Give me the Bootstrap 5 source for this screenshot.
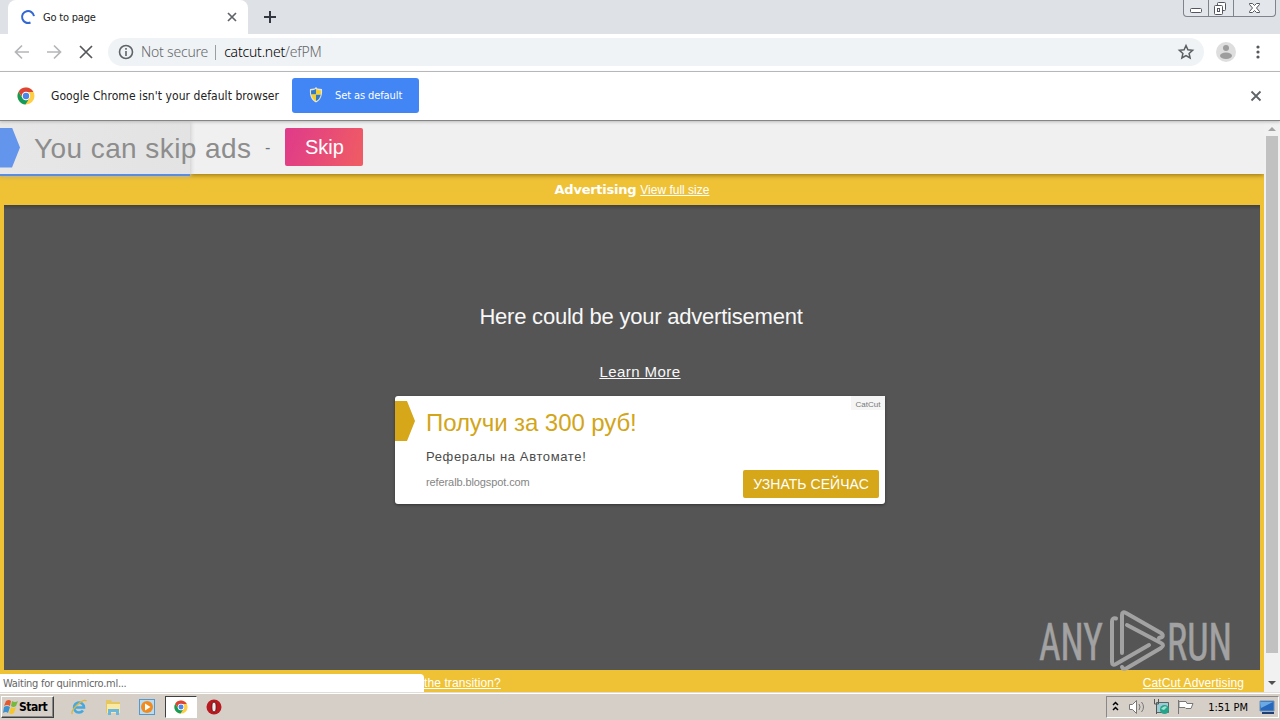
<!DOCTYPE html>
<html lang="en">

<head>
  <meta charset="UTF-8" />
  <meta name="viewport" content="width=device-width, initial-scale=1" />
  <title>Go to page</title>
  <link href="https://cdn.jsdelivr.net/npm/bootstrap@5.3.2/dist/css/bootstrap.min.css" rel="stylesheet" />
  <style>
    body {
      width: 1280px;
      height: 720px;
      overflow: hidden;
      font-family: "DejaVu Sans Condensed", "DejaVu Sans", sans-serif;
      font-stretch: condensed;
      font-size: 11px;
      line-height: 1;
      color: #222;
    }

    svg {
      display: block;
      flex-shrink: 0;
    }

    a,
    a:hover {
      color: inherit;
    }

    .arial {
      font-family: "Liberation Sans", Arial, sans-serif;
      font-stretch: normal;
    }

    /* Tab strip */
    .tab-strip {
      height: 34px;
      background: #dee1e6;
      padding-left: 8px;
    }

    .browser-tab {
      width: 240px;
      height: 34px;
      padding: 0 10px 0 12px;
      background: #fff;
      border-radius: 8px 8px 0 0;
      letter-spacing: -0.2px;
    }

    .browser-tab span {
      margin-left: 7px;
    }

    .window-buttons {
      height: 17px;
      margin-right: 4px;
      border: 1px solid #7e838c;
      border-top: 0;
      border-radius: 0 0 4px 4px;
      background: #e3e6ea;
    }

    .window-buttons div {
      height: 16px;
      width: 24px;
    }

    .window-buttons div+div {
      width: 25px;
      border-left: 1px solid #7e838c;
    }

    .window-buttons div:last-child {
      width: 42px;
    }

    /* Address bar */
    .toolbar {
      height: 38px;
      border-bottom: 1px solid #b4b6b8;
      padding: 4px 12px 5px 14px;
    }

    .address {
      width: 1096px;
      height: 28px;
      margin-left: 14px;
      border-radius: 14px;
      background: #f0f3f5;
      padding: 0 9px 0 10px;
      font-size: 14px;
      font-family: "Noto Sans", sans-serif;
      font-weight: 300;
      letter-spacing: -.2px;
      color: #63676b;
    }

    .address .not-secure {
      margin-left: 7px;
    }

    .address .divider {
      width: 1px;
      height: 15px;
      background: #9a9da1;
      margin: 0 8px 0 7px;
    }

    .profile-icon {
      margin-left: 12px;
    }

    /* Default browser bar */
    .infobar {
      height: 49px;
      padding: 0 18px 0 17px;
      border-bottom: 1px solid #858585;
      z-index: 2;
      background: #fff;
      box-shadow: 0 1px 3px #bbb;
    }

    .infobar .message {
      width: 241px;
      margin-left: 16px;
      font-size: 12px;
      letter-spacing: .06px;
    }

    .default-btn {
      width: 127px;
      height: 35px;
      margin-bottom: 2px;
      border-radius: 3px;
      background: #4285f4;
      color: #fff;
      padding-left: 17px;
      letter-spacing: -0.1px;
    }

    /* Page */
    .page-row {
      height: 571px;
    }

    .page-body {
      width: 1264px;
      background: #efc236;
      overflow: hidden;
    }

    .skip-bar {
      height: 53px;
      background: #f0f0f0;
      box-shadow: 0 1px 5px #8d6e11;
      z-index: 1;
    }

    .skip-progress {
      left: 0;
      top: 0;
      width: 190px;
      height: 55px;
      background: linear-gradient(90deg, #e7e7e7, #e3e3e3);
      border-bottom: 2px solid #5a8de0;
      box-shadow: 1px 0 4px #ccc;
    }

    .pointer-tag {
      width: 20px;
      height: 40px;
      clip-path: polygon(0 0, 60% 0, 100% 50%, 60% 100%, 0 100%);
      background: #6495ed;
    }

    .skip-title {
      width: 231px;
      margin-left: 14px;
      font-size: 28px;
      letter-spacing: .42px;
      color: #8d8d8d;
      padding-top: 2px;
    }

    .skip-btn {
      width: 78px;
      height: 38px;
      margin: 0 0 1px 15px;
      border-radius: 2px;
      background: linear-gradient(110deg, #df3a8b, #f05d62);
      color: #fff;
      font-size: 20px;
    }

    .ad-heading {
      height: 31px;
      color: #fff;
      font-size: 12px;
    }

    .ad-heading strong {
      font-family: "DejaVu Sans", sans-serif;
      font-stretch: normal;
      font-size: 13px;
      letter-spacing: -.25px;
    }

    .ad-area {
      height: 465px;
      margin: 0 4px;
      padding-top: 101px;
      padding-left: 16px;
      background: linear-gradient(#414141, #555 5px);
      color: #f8f8f8;
    }

    .ad-title {
      font-size: 22px;
      line-height: 22px;
      margin-left: 2px;
      letter-spacing: -.22px;
    }

    .learn-more {
      font-size: 15px;
      line-height: 17px;
      margin-top: 35px;
      letter-spacing: .45px;
    }

    .ad-card {
      width: 490px;
      height: 108px;
      margin-top: 16px;
      background: #fff;
      border-radius: 3px;
      box-shadow: 0 1px 3px #333;
    }

    .ad-card .pointer-tag {
      margin-top: 5px;
      background: #d6a719;
    }

    .ad-copy {
      margin-left: 11px;
      width: 317px;
    }

    .ad-copy h2 {
      margin: 15px 0 0;
      font-size: 24px;
      font-weight: 400;
      line-height: 24px;
      color: #d3a519;
      letter-spacing: -.08px;
    }

    .ad-copy p {
      margin: 15px 0 0;
      font-size: 13px;
      color: #4b4b4b;
      letter-spacing: .63px;
    }

    .ad-copy .site {
      margin-top: 14px;
      font-size: 11px;
      color: #858585;
      letter-spacing: -.1px;
    }

    .brand-label {
      width: 34px;
      height: 14px;
      padding-top: 3px;
      background: #f5f5f5;
      font-size: 8px;
      color: #777;
    }

    .learn-btn {
      width: 136px;
      height: 28px;
      margin: 0 6px 6px 0;
      border-radius: 2px;
      background: #d6a719;
      color: #fff;
      font-size: 14px;
      letter-spacing: .05px;
    }

    .page-footer {
      height: 22px;
      padding-top: 4px;
      color: #fff;
      font-size: 12px;
      letter-spacing: .1px;
    }

    .status-text {
      width: 424px;
      height: 18px;
      padding-left: 3px;
      background: #fff;
      border-radius: 0 4px 0 0;
      color: #666;
      font-family: "DejaVu Sans Condensed", sans-serif;
      font-size: 11px;
      letter-spacing: -.28px;
    }

    .scroll-track {
      width: 16px;
      background: #f1f1f1;
    }

    .scroll-track .thumb {
      width: 12px;
      height: 517px;
      background: #c1c1c1;
    }

    .watermark {
      left: 1036px;
      top: 607px;
      z-index: 2;
    }

    /* Taskbar */
    .taskbar {
      height: 28px;
      background: #d6cfc8;
      border-top: 1px solid #e2ddd6;
      box-shadow: inset 0 1px #fff;
      padding: 3px 1px 2px;
    }

    .start-btn {
      width: 53px;
      height: 22px;
      padding-left: 1px;
      border: 1px solid;
      border-color: #fff #404040 #404040 #fff;
      box-shadow: inset -1px -1px #888;
      color: #000;
      font-size: 12px;
      font-weight: 700;
      letter-spacing: -.5px;
    }

    .quick-launch {
      margin-left: 16px;
      gap: 16px;
    }

    .task-active {
      width: 32px;
      height: 22px;
      margin: 0 9px;
      background: #fff;
      border: 1px solid;
      border-color: #404040 #fff #fff #404040;
    }

    .tray {
      width: 173px;
      height: 22px;
      border: 1px solid;
      border-color: #888 #fff #fff #888;
      color: #000;
    }

    .tray svg:last-child {
      margin: 0 2px 0 9px;
    }
  </style>
</head>

<body class="d-flex flex-column position-relative">
  <svg width="0" height="0" class="position-absolute">
    <symbol id="chrome" viewBox="0 0 18 18">
      <circle cx="9" cy="9" r="8.5" fill="#ffce45" />
      <path d="M1.6 4.8A8.5 8.5 0 0 1 16.4 5H9a4 4 0 0 0-3.8 5z" fill="#dd4437" />
      <path d="M1.6 4.8A8.5 8.5 0 0 0 8.5 17.5L12.4 11.2A4 4 0 0 1 5.4 11z" fill="#149b5a" />
      <circle cx="9" cy="9" r="4.2" fill="#fff" />
      <circle cx="9" cy="9" r="3.2" fill="#4a86ec" />
    </symbol>
  </svg>

  <div class="tab-strip d-flex justify-content-between">
    <div class="d-flex align-items-center">
      <div class="browser-tab d-flex align-items-center">
        <svg width="16" height="16" fill="none" stroke="#3367d6" stroke-width="2">
          <path d="M10.5 13.5A6 6 0 1 1 14 7.2" />
        </svg>
        <span class="flex-grow-1">Go to page</span>
        <svg width="12" height="12" stroke="#5f6368" stroke-width="1.7">
          <path d="M2 2l8 8M10 2l-8 8" />
        </svg>
      </div>
      <svg class="ms-3" width="14" height="14" stroke="#333740" stroke-width="2">
        <path d="M6 1v12M0 7h12" />
      </svg>
    </div>
    <div class="window-buttons d-flex">
      <div><svg width="24" height="16" fill="#fff" stroke="#535660">
          <rect x="6.5" y="8.5" width="11" height="4" rx="1" />
        </svg></div>
      <div><svg width="24" height="16" fill="#fff" stroke="#535660">
          <rect x="8.5" y="2.5" width="8" height="8" rx="1" />
          <rect x="5.5" y="5.5" width="8" height="9" rx="1" />
          <rect x="8.5" y="8.5" width="2" height="3" />
        </svg></div>
      <div><svg width="41" height="16" fill="#fff" stroke="#535660">
          <path d="M15.5 3.5h3l2 2 2-2h3v1l-3 3.5 3 3.5v1h-3l-2-2-2 2h-3v-1l3-3.5-3-3.5z" />
        </svg></div>
    </div>
  </div>

  <div class="toolbar d-flex align-items-center">
    <svg width="80" height="16" fill="none" stroke="#b4b6b9" stroke-width="1.7">
      <path d="M15 8H2M8 1.5L1.5 8 8 14.5M33 8h13M40 1.5L46.5 8 40 14.5" />
      <path stroke="#54575b" d="M66 2l12 12M78 2L66 14" />
    </svg>
    <div class="address d-flex align-items-center">
      <svg width="16" height="16" fill="none" stroke="#5f6368" stroke-width="1.6">
        <circle cx="8" cy="8" r="6.5" />
        <path d="M8 7v5M8 4v1.7" />
      </svg>
      <span class="not-secure">Not secure</span>
      <span class="divider"></span>
      <span class="flex-grow-1"><span class="text-black">catcut.net</span>/efPM</span>
      <svg width="18" height="18" fill="none" stroke="#5b5e62" stroke-width="1.5">
        <path d="M9 2.5l1.9 4.3 4.7.5-3.5 3.1 1 4.6L9 12.6 4.9 15l1-4.6-3.5-3.1 4.7-.5z" />
      </svg>
    </div>
    <svg class="profile-icon" width="20" height="20">
      <circle cx="10" cy="10" r="10" fill="#dedede" />
      <circle cx="10" cy="6" r="3" fill="#9d9d9d" />
      <ellipse cx="10" cy="13.7" rx="6" ry="3.2" fill="#9d9d9d" />
    </svg>
    <svg class="ms-auto" width="20" height="16" fill="#55585c">
      <circle cx="10" cy="3" r="1.6" />
      <circle cx="10" cy="8" r="1.6" />
      <circle cx="10" cy="13" r="1.6" />
    </svg>
  </div>

  <div class="infobar position-relative d-flex align-items-center">
    <svg width="18" height="18">
      <use href="#chrome" />
    </svg>
    <span class="message text-nowrap">Google Chrome isn't your default browser</span>
    <div class="default-btn d-flex align-items-center">
      <svg width="14" height="16">
        <path d="M7 0l1.5 1.5L13 2c.6 6-1 11-6 13.5C2 13 .4 8 1 2l4.5-.5z" fill="#e4e5d8" />
        <path d="M7 2v5.5H2.2C2 6 2 5 2.1 3.2c2 0 3.5-.2 4.9-1.2" fill="#3379c4" />
        <path d="M7 7.5h4.8c-.6 3-2.1 5.2-4.8 6.6z" fill="#3379c4" />
        <path d="M7 2c1.4 1 3 1.2 4.9 1.2.1 1.8.1 2.8-.1 4.300H7zM7 7.5v6.6c-2.7-1.4-4.2-3.6-4.8-6.6z" fill="#f4cf2c" />
      </svg>
      <span class="ms-2 ps-1">Set as default</span>
    </div>
    <svg class="ms-auto" width="12" height="12" stroke="#5f6368" stroke-width="1.8">
      <path d="M1.5 1.5l9 9M10.5 1.5l-9 9" />
    </svg>
  </div>

  <div class="page-row d-flex">
    <div class="page-body arial d-flex flex-column">
      <div class="skip-bar position-relative d-flex align-items-center">
        <div class="skip-progress position-absolute"></div>
        <div class="pointer-tag position-relative"></div>
        <span class="skip-title position-relative text-nowrap">You can skip ads</span>
        <span class="position-relative fs-6 text-secondary">-</span>
        <div class="skip-btn d-flex align-items-center justify-content-center">Skip</div>
      </div>
      <div class="ad-heading d-flex align-items-center justify-content-center">
        <strong>Advertising</strong><a href="#" class="ms-1">View full size</a>
      </div>
      <div class="ad-area d-flex flex-column align-items-center">
        <div class="ad-title">Here could be your advertisement</div>
        <a href="#" class="learn-more">Learn More</a>
        <div class="ad-card d-flex">
          <div class="pointer-tag"></div>
          <div class="ad-copy text-nowrap">
            <h2>Получи за 300 руб!</h2>
            <p>Рефералы на Автомате!</p>
            <div class="site">referalb.blogspot.com</div>
          </div>
          <div class="d-flex flex-column align-items-end justify-content-between">
            <div class="brand-label d-flex align-items-center justify-content-center">CatCut</div>
            <div class="learn-btn d-flex align-items-center justify-content-center">УЗНАТЬ СЕЙЧАС</div>
          </div>
        </div>
      </div>
      <div class="page-footer d-flex align-items-center">
        <div class="status-text d-flex align-items-center">Waiting for quinmicro.ml...</div>
        <a href="#">the transition?</a>
        <a href="#" class="ms-auto me-3 pe-1">CatCut Advertising</a>
      </div>
    </div>
    <div class="scroll-track d-flex flex-column align-items-center">
      <svg width="16" height="15" fill="#a3a3a3">
        <path d="M4 10h8L8 6z" />
      </svg>
      <div class="thumb"></div>
      <svg class="mt-auto" width="16" height="17" fill="#505050">
        <path d="M4 6h8l-4 4z" />
      </svg>
    </div>
  </div>

  <svg class="watermark position-absolute" width="204" height="68" fill="#a2a2a2" font-family="Roboto, sans-serif" font-size="52">
    <g stroke="#a2a2a2" stroke-width=".6">
      <text transform="translate(3 53) scale(.72 1)">ANY</text>
      <text transform="translate(131 53) scale(.73 1)">RUN</text>
    </g>
    <g fill="none" stroke="#a2a2a2" stroke-width="4" stroke-linecap="round" stroke-linejoin="round">
      <path d="M80 11.5q-4-1-4 3V55q0 4 4 2l33-19" />
      <path d="M86 46V8q0-4 4-2l35 20q3 2 1 4l-3 1M91 18l34 18q4 2 0 5L91 61q-4 2-5-1" />
    </g>
  </svg>

  <div class="taskbar d-flex align-items-center">
    <div class="start-btn d-flex align-items-center">
      <svg width="16" height="16">
        <path d="M3 2q3-2 5 0L7 7Q4 5 1 7z" fill="#e4582f" />
        <path d="M9 2q3 2 6 0l-2 5q-3 2-5 0z" fill="#77b83f" />
        <path d="M1 8q3-2 6 0l-2 6q-2-2-5 0z" fill="#3c91d0" />
        <path d="M8 8q3 2 5 0l-2 6q-3 2-5 0z" fill="#f5c62e" />
      </svg>
      <span>Start</span>
    </div>
    <div class="quick-launch d-flex">
      <svg width="18" height="18" fill="none">
        <path d="M4.5 9.5h9.5A5 5 0 1 0 13 12.5" stroke="#45a9e0" stroke-width="2.6" />
        <path d="M2.5 16C-1 13 13 0 16.5 3" stroke="#dcb83f" stroke-width="1.3" />
      </svg>
      <svg width="18" height="18">
        <path d="M2 2h5l1 2h8v11H2z" fill="#e5c761" />
        <path d="M3 6h13v9H3z" fill="#fae9a2" />
        <path d="M4 17v-6h11v6h-3v-3H7v3z" fill="#6bb7dd" />
      </svg>
      <svg width="18" height="18">
        <rect x="1.5" y="1.5" width="15" height="15" fill="#b8dcf3" stroke="#5599cc" />
        <circle cx="9" cy="9" r="6" fill="#f18b20" />
        <path d="M7 5.5v7L12.5 9z" fill="#fff" />
      </svg>
    </div>
    <div class="task-active d-flex align-items-center justify-content-center">
      <svg width="14" height="14">
        <use href="#chrome" />
      </svg>
    </div>
    <svg width="16" height="16">
      <circle cx="8" cy="8" r="7.5" fill="#b91a20" />
      <ellipse cx="8" cy="8" rx="2.2" ry="5" fill="#eee" stroke="#651014" />
    </svg>
    <div class="tray d-flex align-items-center ms-auto">
      <svg width="92" height="20" fill="none">
        <path d="M6 8l2.5-2.5L11 8M6 13l2.5-2.5L11 13" stroke="#000" stroke-width="1.5" />
        <path d="M22.5 7.5h3l4-4v13l-4-4h-3z" fill="#fff" stroke="#777" />
        <path d="M32 7q2 3 0 6M34.5 5q4 5 0 10" stroke="#777" />
        <path d="M49.5 5.5h12v10h-12z" fill="#9bcbd4" stroke="#566" />
        <path d="M47.5 2v5h4V2M49.5 7v10" stroke="#555" />
        <circle cx="57.5" cy="12.5" r="4.5" fill="#25a48b" />
        <path d="M54 12q3-4 6-2l-3 3z" fill="#a2e1d1" />
        <path d="M71.5 3v14M72 4.5h7l1 2h6l-2 5h-5l-1-1h-6z" fill="#fff" stroke="#777" />
      </svg>
      <span class="ms-auto">1:51 PM</span>
      <svg width="19" height="20">
        <path d="M3 4h14v10H3z" fill="#2768bd" stroke="#6d91b8" />
        <path d="M3 5h13L4 11z" fill="#6ba9e5" />
        <path d="M5 15h12v2H5z" fill="#1d3f73" />
      </svg>
    </div>
  </div>

  <script src="https://cdn.jsdelivr.net/npm/bootstrap@5.3.2/dist/js/bootstrap.bundle.min.js"></script>
</body>

</html>
